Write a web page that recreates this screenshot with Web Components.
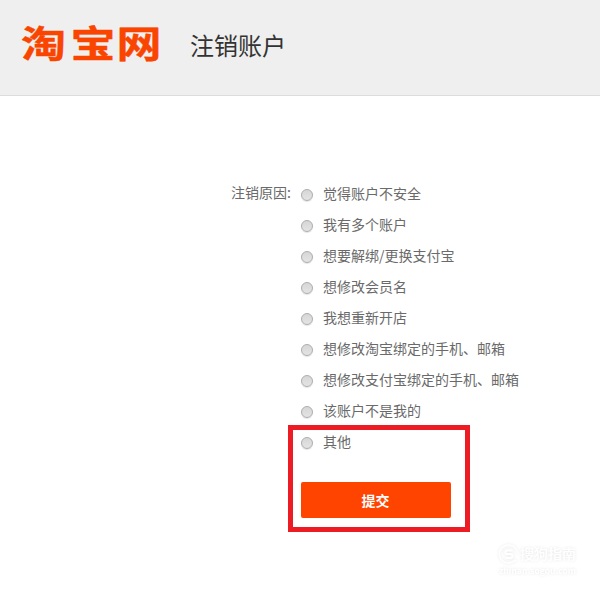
<!DOCTYPE html>
<html lang="zh-CN">
<head>
<meta charset="utf-8">
<title>注销账户</title>
<style>
html,body{margin:0;background:#fff}
body{width:600px;height:600px;overflow:hidden;font-family:"Noto Sans CJK SC","Liberation Sans",sans-serif}
</style>
</head>
<body>
<account-page></account-page>
<script>
function define(name, html) {
  const t = document.createElement('template');
  t.innerHTML = html;
  customElements.define(name, class extends HTMLElement {
    constructor() {
      super();
      this.attachShadow({mode: 'open'}).appendChild(t.content.cloneNode(true));
    }
  });
}

define('brand-logo', `
<style>
:host{display:block;width:142px;height:40px}
svg{display:block;overflow:visible}
text{font-family:"Noto Sans CJK SC",sans-serif;font-weight:700;font-size:45px;fill:#f94500;stroke:#f94500;stroke-width:.5;stroke-linejoin:round}
</style>
<svg width="142" height="40" viewBox="0 0 142 40">
  <g transform="translate(0 34.3) scale(1 .83)">
    <text x="0" y="0">淘</text><text x="49.5" y="0">宝</text><text x="95.5" y="0">网</text>
  </g>
</svg>`);

define('page-header', `
<style>
:host{display:flex;box-sizing:border-box;height:96px;padding:24px 0 0 21px;background:#efefef;border-bottom:1px solid #ddd;gap:27px}
h1{margin:3px 0 0;font-size:24px;line-height:36px;font-weight:400;color:#333}
</style>
<brand-logo></brand-logo>
<h1><slot></slot></h1>`);

define('reason-option', `
<style>
:host{display:flex;height:31px;gap:10px;font-size:14px;line-height:20px;color:#6a6a6a;white-space:nowrap}
i{box-sizing:border-box;width:12px;height:12px;margin-top:6px;border-radius:50%;border:1px solid #adadad;background:linear-gradient(#d6d6d6,#e4e4e4);box-shadow:0 1px 1px #e4e4e4}
</style>
<i></i><span><slot></slot></span>`);

define('submit-button', `
<style>
:host{display:block;width:150px}
button{display:block;width:100%;height:36px;border:0;padding:0 1px 0 0;border-radius:2px;background:#ff4400;color:#fff;font:bold 14px/20px "Noto Sans CJK SC",sans-serif}
</style>
<button type="button"><slot></slot></button>`);

define('highlight-box', `
<style>
:host{position:absolute;box-sizing:border-box;left:288px;top:425px;width:182px;height:107px;border:5px solid #ed1c24;pointer-events:none}
</style>`);

define('guide-watermark', `
<style>
:host{position:absolute;left:499px;top:541px;width:80px;height:36px}
svg{display:block;overflow:visible;filter:drop-shadow(0 0 1.5px rgba(0,0,0,.1))}
text{fill:#fff;font-family:"Noto Sans CJK SC",sans-serif}
</style>
<svg width="80" height="36" viewBox="0 0 80 36">
  <path d="M15.8 19.4A9 9 0 1 1 18.4 12M15 18.8l2.6 1.4" fill="none" stroke="#fff" stroke-width="1.5"/>
  <path d="M13.2 9.3H8.6Q6.4 9.3 6.4 11.2T8.6 13.1H11.4Q13.6 13.1 13.6 15T11.4 16.9H6.4" fill="none" stroke="#fff" stroke-width="2.2"/>
  <text x="21" y="18" font-size="14" textLength="56" font-weight="500">搜狗指南</text>
  <text x="0" y="33" font-size="8" textLength="77" lengthAdjust="spacingAndGlyphs" font-weight="700">zhinan.sogou.com</text>
</svg>`);

define('reason-form', `
<style>
:host{display:grid;grid-template-columns:291px 1fr;column-gap:10px;padding-top:87px}
label{margin-top:-1px;text-align:right;font-size:14px;line-height:20px;color:#6a6a6a;white-space:nowrap}
submit-button{margin-top:20px}
</style>
<label>注销原因:</label>
<div><slot></slot><submit-button>提交</submit-button></div>`);

define('account-page', `
<style>:host{display:block;position:relative;width:600px;height:600px;background:#fff;overflow:hidden}</style>
<page-header>注销账户</page-header>
<reason-form>
  <reason-option>觉得账户不安全</reason-option>
  <reason-option>我有多个账户</reason-option>
  <reason-option>想要解绑/更换支付宝</reason-option>
  <reason-option>想修改会员名</reason-option>
  <reason-option>我想重新开店</reason-option>
  <reason-option>想修改淘宝绑定的手机、邮箱</reason-option>
  <reason-option>想修改支付宝绑定的手机、邮箱</reason-option>
  <reason-option>该账户不是我的</reason-option>
  <reason-option>其他</reason-option>
</reason-form>
<highlight-box></highlight-box>
<guide-watermark></guide-watermark>`);
</script>
</body>
</html>
